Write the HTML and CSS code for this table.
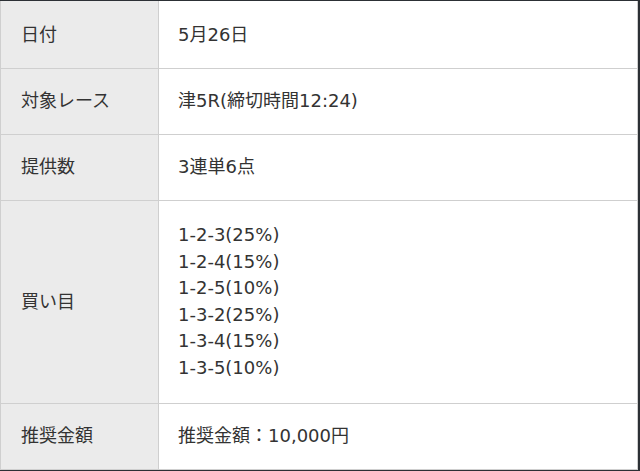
FILE: index.html
```html
<!DOCTYPE html>
<html lang="ja">
<head>
<meta charset="utf-8">
<link rel="stylesheet" href="styles.css">
</head>
<body>
<div class="wrap">
<table class="info">
<tr><th>日付</th><td>5月26日</td></tr>
<tr><th>対象レース</th><td>津5R(締切時間12:24)</td></tr>
<tr><th>提供数</th><td>3連単6点</td></tr>
<tr class="multi"><th>買い目</th><td>1-2-3(25%)<br>1-2-4(15%)<br>1-2-5(10%)<br>1-3-2(25%)<br>1-3-4(15%)<br>1-3-5(10%)</td></tr>
<tr><th>推奨金額</th><td>推奨金額：10,000円</td></tr>
</table>
</div>
</body>
</html>
```
FILE: styles.css
```css
html, body {
  margin: 0;
  padding: 0;
  background: #2c3035;
}
.wrap {
  padding-top: 1px;
  width: 638px;
}
.info {
  width: 638px;
  border-collapse: collapse;
  background: #fff;
  font-family: "DejaVu Sans", "Noto Sans CJK JP", sans-serif;
  font-size: 18px;
  color: #333;
  line-height: 26.6px;
}
.info th, .info td {
  border: 1px solid #cfcfcf;
  padding: 19.2px 19px;
  text-align: left;
  font-weight: normal;
  vertical-align: middle;
}
.info tr:first-child th, .info tr:first-child td {
  border-top: none;
  padding-top: 21.2px;
}
.info .multi th, .info .multi td {
  padding-top: 21.2px;
  padding-bottom: 21.2px;
}
.info th {
  width: 119px;
  background: #ebebeb;
  padding-left: 20px;
  padding-right: 18px;
}
```
